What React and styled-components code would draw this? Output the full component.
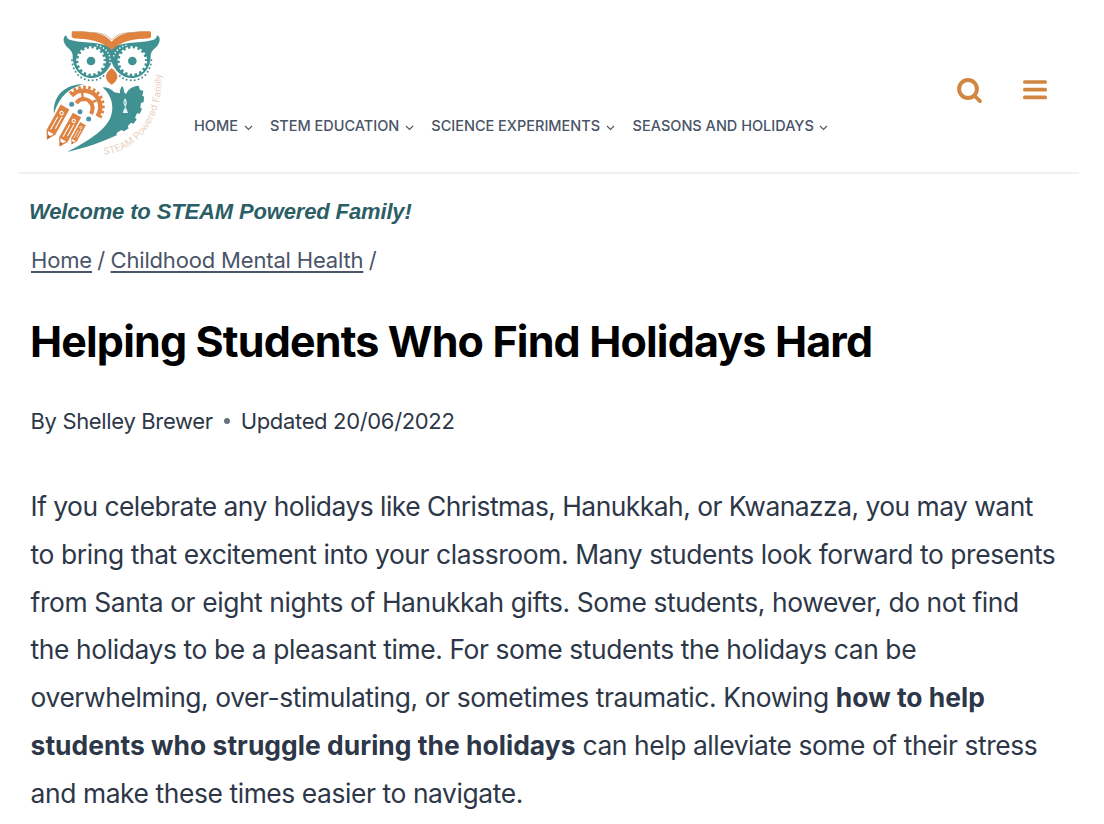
import React from "react";
import styled, { createGlobalStyle } from "styled-components";

const GlobalStyle = createGlobalStyle`
  * { box-sizing: border-box; }
  body { margin: 0; background: #fff; font-family: Inter, "Liberation Sans", sans-serif; color: #2d3748; }
  #root { height: 824px; overflow: hidden; }
`;

const Header = styled.header`
  display: flex;
  height: 174px;
  margin: 0 25px 0 19px;
  padding: 15px 31px 0 11px;
  border-bottom: 2px solid #edf2f7;
`;

const Logo = styled.svg`
  flex: none;
  width: 150px;
  height: 150px;
  overflow: visible;
`;

const Nav = styled.nav`
  display: flex;
  flex: 1;
  height: 24px;
  margin: 99px 0 0 14px;
`;

const NavLink = styled.a`
  display: flex;
  flex: none;
  align-items: center;
  width: ${(p) => p.$width}px;
  color: #4a5568;
  font-size: 14.5px;
  font-weight: 500;
  line-height: 24px;
  letter-spacing: ${(p) => p.$tracking}px;
  white-space: nowrap;
`;

const Chevron = styled.svg`
  flex: none;
  width: 9px;
  height: 6px;
  margin: 3px 17.5px 0 auto;
  fill: none;
  stroke: #4a5568;
  stroke-width: 1.1;
`;

const Tools = styled.div`
  display: flex;
  gap: 40px;
  margin-top: 62px;
  height: 28px;
  color: #d18742;
`;

const ToolIcon = styled.svg`
  width: 26px;
  height: 28px;
  fill: none;
  stroke: currentColor;
  stroke-linecap: round;
`;

const Page = styled.main`
  padding-left: 30px;
`;

const Welcome = styled.p`
  margin: 23px 0 0 -1px;
  font-family: "Liberation Sans", Arial, sans-serif;
  font-size: 22px;
  font-weight: 700;
  font-style: italic;
  line-height: 30px;
  letter-spacing: ${(p) => p.$tracking}px;
  color: #2c5e66;
`;

const Breadcrumbs = styled.div`
  display: flex;
  gap: 5.4px;
  margin: 18px 0 0 1px;
  font-size: 22px;
  line-height: 30px;
  letter-spacing: ${(p) => p.$tracking}px;
  color: #4a5568;
  a {
    text-decoration: underline;
    text-decoration-thickness: 1.5px;
    text-underline-offset: 3px;
  }
`;

const Title = styled.h1`
  margin: 38px 0 0;
  font-size: 43px;
  font-weight: 700;
  line-height: 56px;
  letter-spacing: ${(p) => p.$tracking}px;
  color: #000;
`;

const Meta = styled.div`
  display: flex;
  align-items: center;
  margin: 37px 0 0 0.5px;
  font-size: 22px;
  line-height: 30px;
  letter-spacing: ${(p) => p.$tracking}px;
`;

const Dot = styled.span`
  width: 6px;
  height: 6px;
  margin: 0 11px;
  border-radius: 50%;
  background: #687180;
`;

const Body = styled.p`
  margin: 47px 0 0 0.6px;
  font-size: 26.4px;
  line-height: 47.75px;
  b {
    letter-spacing: 0.04px;
  }
`;

const Line = styled.span`
  display: block;
  white-space: nowrap;
  letter-spacing: ${(p) => p.$tracking}px;
`;

const navItems = [
  { label: "HOME", width: 76, tracking: 0 },
  { label: "STEM EDUCATION", width: 161.3, tracking: -0.02 },
  { label: "SCIENCE EXPERIMENTS", width: 201.3, tracking: -0.01 },
  { label: "SEASONS AND HOLIDAYS", width: 212.9, tracking: 0 },
];

const Eye = ({ x }) => (
  <g transform={`translate(${x} 138)`}>
    <circle r="38" fill="#fff" />
    <circle r="40" fill="none" stroke="#fff" strokeWidth="9" strokeDasharray="7 6.96" />
    <circle r="13" fill="#3f9192" />
  </g>
);

const Pencil = ({ x, y, scale = 1 }) => (
  <g transform={`translate(${x} ${y}) rotate(29) scale(${scale})`}>
    <path d="M-15 0h30v87L0 112-15 87z" fill="#de8443" />
    <path d="M-5 36v44M6 30v41" stroke="#fff" strokeWidth="3" />
    <circle cy="21" r="5" fill="none" stroke="#fff" strokeWidth="3" />
    <path d="M-10 88h20L0 102z" fill="#fff" />
    <path d="M-4 98h8L0 109z" fill="#a86138" />
  </g>
);

const HeadHalf = () => (
  <g>
    <path
      d="M108 61C99 67 98 79 108 92c8 10 16 11 20 27-2 38 23 70 57 70 29 0 53-23 61-51V99C202 77 145 86 116 73c-5-3-6-8-8-12z"
      fill="#3f9192"
    />
    <path d="M126 136c3 38 28 62 63 60 16-1 28-8 38-20" fill="none" stroke="#3f9192" strokeWidth="6" strokeLinecap="round" strokeDasharray="0 12" />
  </g>
);

const Owl = () => (
  <Logo viewBox="0 0 450 450" role="img" aria-label="STEAM Powered Family">
    <HeadHalf />
    <g transform="translate(490 0) scale(-1 1)">
      <HeadHalf />
    </g>
    <path d="M202 91c20 5 34 19 38 38v22M288 91c-20 5-34 19-38 38" fill="none" stroke="#fff" strokeWidth="5" strokeLinecap="round" strokeDasharray="0 10" />
    <Eye x={183} />
    <Eye x={307} />
    <path
      d="M128 49h30c43 3 69 10 87 31 18-21 44-28 87-31h27q4 0 4 5v10q0 5-5 6c-46 3-82 5-113 36-31-31-72-33-113-36q-7-1-7-6V54q0-5 3-5z"
      fill="#e0833f"
    />
    <path d="M172 53c35-2 58 4 73 22 15-18 38-24 73-22" fill="#fff" stroke="#b79678" strokeWidth="2" />
    <path d="M245 160c9 6 17 16 17 25 0 11-9 18-17 24-8-6-17-13-17-24 0-9 8-19 17-25z" fill="#df7d3a" />
    <path d="M72 296c-5-56 37-89 90-89-45 13-72 34-90 89z" fill="#3f9192" />
    <path
      d="M218 217c15 0 25 5 35 15l17 3c-1-9 2-17 6-22 4 4 6 10 6 18l6 7c6-17 20-24 38-26l4 13 10 2-3 15 5 3-1 16-8 3-2 14 5 4-7 14-8-1-6 13 5 5-9 13-8-3-10 11 3 6-14 9-8-4-14 9v7c-46 21-93 38-148 50 57-31 112-61 130-105 11-28 5-63-24-89z"
      fill="#3f9192"
    />
    <path d="M285 250c-7 8-5 18 0 24l-7 20h16l-7-20c5-7 5-17-2-24z" fill="#e8f4f4" />
    <path d="M285 257v11M279 279h13" stroke="#3f9192" strokeWidth="2" />
    <g fill="none" stroke="#df8442">
      <path d="M125 242c25-26 66-16 81 12 9 18 6 34-4 50" strokeWidth="13" />
      <path d="M120 236c29-32 77-22 94 14 9 20 6 42-6 60" strokeWidth="10" strokeDasharray="8 7" />
      <path d="M139 265c14-23 41-12 47 4 4 11 2 19-3 28" strokeWidth="12" />
      <path d="M156 231l4 28M200 256l-24 10" strokeWidth="7" />
    </g>
    <Pencil x={105} y={276} />
    <Pencil x={141} y={300} scale={0.97} />
    <Pencil x={159} y={326} scale={0.64} />
    <g fill="#4d91ad">
      <circle cx="125" cy="268" r="7.5" />
      <circle cx="150" cy="290" r="7.5" />
      <circle cx="176" cy="312" r="7.5" />
    </g>
    <path id="owl-caption" d="M222 419C318 408 382 328 393 225Q398 190 389 158" fill="none" />
    <text fill="#ecd0c0" fontFamily="Inter, sans-serif" fontSize="29">
      <textPath href="#owl-caption" textLength="330">STEAM Powered Family</textPath>
    </text>
  </Logo>
);

export default function App() {
  return (
    <>
      <GlobalStyle />
      <Header>
        <Owl />
        <Nav>
          {navItems.map((item) => (
            <NavLink key={item.label} $width={item.width} $tracking={item.tracking}>
              {item.label}
              <Chevron viewBox="0 0 9 6">
                <path d="M1 1l3.5 3.5L8 1" />
              </Chevron>
            </NavLink>
          ))}
        </Nav>
        <Tools>
          <ToolIcon viewBox="0 0 26 28" aria-label="Search">
            <circle cx="12" cy="12" r="8.9" strokeWidth="4" />
            <path d="M18.8 19l5.1 5.2" strokeWidth="3.8" />
          </ToolIcon>
          <ToolIcon viewBox="0 0 26 28" aria-label="Menu">
            <path d="M2.8 5h20.4M2.8 12.7h20.4M2.8 20.4h20.4" strokeWidth="3.7" />
          </ToolIcon>
        </Tools>
      </Header>
      <Page>
        <Welcome $tracking={-0.14}>Welcome to STEAM Powered Family!</Welcome>
        <Breadcrumbs $tracking={-0.17}>
          <a>Home</a>
          <span>/</span>
          <a>Childhood Mental Health</a>
          <span>/</span>
        </Breadcrumbs>
        <Title $tracking={-0.84}>Helping Students Who Find Holidays Hard</Title>
        <Meta $tracking={-0.34}>
          <span>By Shelley Brewer</span>
          <Dot />
          <span>Updated 20/06/2022</span>
        </Meta>
        <Body>
          <Line $tracking={-0.52}>If you celebrate any holidays like Christmas, Hanukkah, or Kwanazza, you may want</Line>
          <Line $tracking={-0.4}>to bring that excitement into your classroom. Many students look forward to presents</Line>
          <Line $tracking={-0.4}>from Santa or eight nights of Hanukkah gifts. Some students, however, do not find</Line>
          <Line $tracking={-0.39}>the holidays to be a pleasant time. For some students the holidays can be</Line>
          <Line $tracking={-0.41}>overwhelming, over-stimulating, or sometimes traumatic. Knowing <b>how to help</b></Line>
          <Line $tracking={-0.42}><b>students who struggle during the holidays</b> can help alleviate some of their stress</Line>
          <Line $tracking={-0.41}>and make these times easier to navigate.</Line>
        </Body>
      </Page>
    </>
  );
}
